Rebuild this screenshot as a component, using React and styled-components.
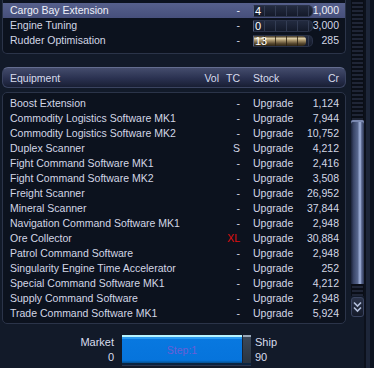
import styled, { createGlobalStyle } from 'styled-components';

const GlobalStyle = createGlobalStyle`
  html, body {
    margin: 0;
    padding: 0;
    background: #121a29;
    overflow: hidden;
  }
  body {
    font-family: "Liberation Sans", Arial, sans-serif;
    font-size: 10.5px;
    color: #d3d7e6;
  }
`;

const Page = styled.div`
  width: 374px;
  height: 368px;
  display: grid;
  grid-template-columns: 349px 15px 2px 4px 4px;
  background: #121a29;
  overflow: hidden;
`;

const Main = styled.div`
  padding-left: 2px;
  display: flex;
  flex-direction: column;
`;

const Panel = styled.div`
  width: 344px;
  box-sizing: border-box;
  background: #0c121e;
  border: 1px solid #2b3449;
  border-radius: 5px;
  padding: ${(p) => p.$pad};
  margin-top: ${(p) => p.$mt || '0'};
`;

const TopPanel = styled(Panel)`
  border-top: none;
  border-top-left-radius: 0;
  border-top-right-radius: 0;
`;

const Row = styled.div`
  display: grid;
  grid-template-columns: 1fr 24px 21px 59px 40px;
  align-items: center;
  height: 15px;
  line-height: 15px;
  padding: 0 6px 0 7px;
  white-space: nowrap;
  background: ${(p) => (p.$active ? 'linear-gradient(#56608c, #464f7b)' : 'transparent')};
  color: ${(p) => (p.$active ? '#eef0f8' : '#d3d7e6')};
`;

const UpgradeRow = styled(Row)`
  grid-template-columns: 1fr 21px 13px 57px 29px;
`;

const Cell = styled.span`
  text-align: ${(p) => (p.$right ? 'right' : 'left')};
  padding-left: ${(p) => p.$pl || '0'};
  color: ${(p) => p.$color || 'inherit'};
  overflow: visible;
`;

const Bar = styled.div`
  position: relative;
  height: 12px;
  width: 60px;
  margin-right: -3px;
  box-sizing: border-box;
  border: 1px solid #2a3248;
  border-left-color: #55607c;
  border-radius: 1px 5px 5px 1px;
  background:
    repeating-linear-gradient(to right, transparent 0 10px, rgba(60, 70, 95, 0.7) 10px 11px),
    linear-gradient(#232b40, #141a2a);
  overflow: hidden;
`;

const BarFill = styled.div`
  height: 100%;
  background:
    repeating-linear-gradient(to right, transparent 0 10px, rgba(40, 30, 15, 0.8) 10px 11px),
    linear-gradient(#3a3020, #d8c8a0 25%, #a8946c 45%, #5a4a30 75%, #2a2214);
  border-radius: 0 4px 4px 0;
`;

const BarCount = styled.span`
  position: absolute;
  left: 1px;
  top: -2px;
  line-height: 14px;
  font-size: 11px;
  color: #ffffff;
`;

const Header = styled.div`
  width: 344px;
  box-sizing: border-box;
  height: 21px;
  margin-top: 13px;
  border: 1px solid #3a4360;
  border-top-color: #646d90;
  border-radius: 6px;
  background: linear-gradient(#444c6c, #2a3150 55%, #181e33);
  display: grid;
  grid-template-columns: 1fr 24px 21px 59px 40px;
  align-items: center;
  padding: 0 6px 0 7px;
  color: #d8dcec;
`;

const Footer = styled.div`
  display: flex;
  align-items: flex-start;
  margin-top: 11px;
`;

const Labels = styled.div`
  width: ${(p) => p.$w};
  display: flex;
  flex-direction: column;
  align-items: ${(p) => (p.$right ? 'flex-end' : 'flex-start')};
  line-height: 15px;
  font-size: 11px;
  color: #d8dcec;
`;

const StepButton = styled.div`
  width: 129px;
  height: 30px;
  margin: 0 4px 0 8px;
  box-sizing: border-box;
  display: flex;
  border-bottom: 2px solid #0b2440;
  box-shadow: 0 1px 0 #2c3650;
`;

const StepFace = styled.div`
  flex: 1;
  display: flex;
  align-items: center;
  justify-content: center;
  background: linear-gradient(#b8f4ff 0 2px, #2a9af0 2px 4px, #0878e0 4px, #0674dc 90%, #05508f);
  color: #6a5ed6;
  padding-top: 2px;
`;

const StepEnd = styled.div`
  width: 8px;
  background: linear-gradient(#9aa8b8 0 2px, #3c4858 2px, #2a3440);
  border-left: 1px solid #1a2230;
`;

const Status = styled.div`
  display: flex;
  justify-content: space-between;
  padding: 0 8px;
  line-height: 15px;
  font-size: 11px;
  color: #d8dcec;
`;

const Track = styled.div`
  margin-left: 2px;
  width: 13px;
  height: 318px;
  display: flex;
  flex-direction: column;
`;

const Ribs = styled.div`
  height: ${(p) => p.$h};
  background: repeating-linear-gradient(#0a0e17 0 2px, #1f2536 2px 4px);
  border-left: 1px solid #0a0e16;
  border-right: 1px solid #0a0e16;
  box-sizing: border-box;
`;

const Thumb = styled.div`
  height: 164px;
  border-radius: 2px 2px 0 0;
  background: linear-gradient(to right, #1a2238, #3a4668 20%, #56658c 50%, #a8b8e0 70%, #5a6890 82%, #2a3450);
  box-shadow: inset 0 2px 0 #7a88b0;
`;

const ScrollButton = styled.div`
  height: 20px;
  margin-top: 1px;
  border: 1px solid #3a4460;
  border-radius: 3px;
  background: linear-gradient(#2a3248, #151b2a);
  display: flex;
  align-items: center;
  justify-content: center;
  box-sizing: border-box;
`;

const FrameLine = styled.div`
  background: #0c111c;
`;

const FrameEdge = styled.div`
  background: #1d2639;
`;

const FrameOuter = styled.div`
  background: #0d1320;
`;

const upgrades = [
  { name: 'Cargo Bay Extension', count: '4', fill: 0, price: '1,000', active: true },
  { name: 'Engine Tuning', count: '0', fill: 0, price: '3,000' },
  { name: 'Rudder Optimisation', count: '13', fill: 89, price: '285' },
];

const equipment = [
  ['Boost Extension', '-', '1,124'],
  ['Commodity Logistics Software MK1', '-', '7,944'],
  ['Commodity Logistics Software MK2', '-', '10,752'],
  ['Duplex Scanner', 'S', '4,212'],
  ['Fight Command Software MK1', '-', '2,416'],
  ['Fight Command Software MK2', '-', '3,508'],
  ['Freight Scanner', '-', '26,952'],
  ['Mineral Scanner', '-', '37,844'],
  ['Navigation Command Software MK1', '-', '2,948'],
  ['Ore Collector', 'XL', '30,884'],
  ['Patrol Command Software', '-', '2,948'],
  ['Singularity Engine Time Accelerator', '-', '252'],
  ['Special Command Software MK1', '-', '4,212'],
  ['Supply Command Software', '-', '2,948'],
  ['Trade Command Software MK1', '-', '5,924'],
];

const Chevrons = () => (
  <svg width="9" height="12" viewBox="0 0 9 12">
    <path d="M1 1.5 L4.5 5 L8 1.5" stroke="#b4c0dc" strokeWidth="1.6" fill="none" />
    <path d="M1 6.5 L4.5 10 L8 6.5" stroke="#b4c0dc" strokeWidth="1.6" fill="none" />
  </svg>
);

export default function App() {
  return (
    <>
      <GlobalStyle />
      <Page>
        <Main>
          <TopPanel $pad="3px 0 5px">
            {upgrades.map((u) => (
              <UpgradeRow key={u.name} $active={u.active}>
                <Cell>{u.name}</Cell>
                <Cell $right>-</Cell>
                <span />
                <Bar>
                  {u.fill > 0 && <BarFill style={{ width: `${u.fill}%` }} />}
                  <BarCount>{u.count}</BarCount>
                </Bar>
                <Cell $right>{u.price}</Cell>
              </UpgradeRow>
            ))}
          </TopPanel>

          <Header>
            <Cell>Equipment</Cell>
            <Cell $right>Vol</Cell>
            <Cell $right>TC</Cell>
            <Cell $pl="13px">Stock</Cell>
            <Cell $right>Cr</Cell>
          </Header>

          <Panel $pad="3px 0 2px" $mt="4px">
            {equipment.map(([name, tc, price]) => (
              <Row key={name}>
                <Cell>{name}</Cell>
                <span />
                <Cell $right $color={tc === 'XL' ? '#e01010' : undefined}>{tc}</Cell>
                <Cell $pl="13px">Upgrade</Cell>
                <Cell $right>{price}</Cell>
              </Row>
            ))}
          </Panel>

          <Footer>
            <Labels $w="112px" $right>
              <span>Market</span>
              <span>0</span>
            </Labels>
            <StepButton>
              <StepFace>Step:1</StepFace>
              <StepEnd />
            </StepButton>
            <Labels $w="60px">
              <span>Ship</span>
              <span>90</span>
            </Labels>
          </Footer>
          <Status>
            <span>Freight 64/90</span>
            <span>7,924,000 Cr</span>
          </Status>
        </Main>

        <Track>
          <Ribs $h="120px" />
          <Thumb />
          <Ribs $h="12px" />
          <ScrollButton>
            <Chevrons />
          </ScrollButton>
        </Track>
        <FrameLine />
        <FrameEdge />
        <FrameOuter />
      </Page>
    </>
  );
}
